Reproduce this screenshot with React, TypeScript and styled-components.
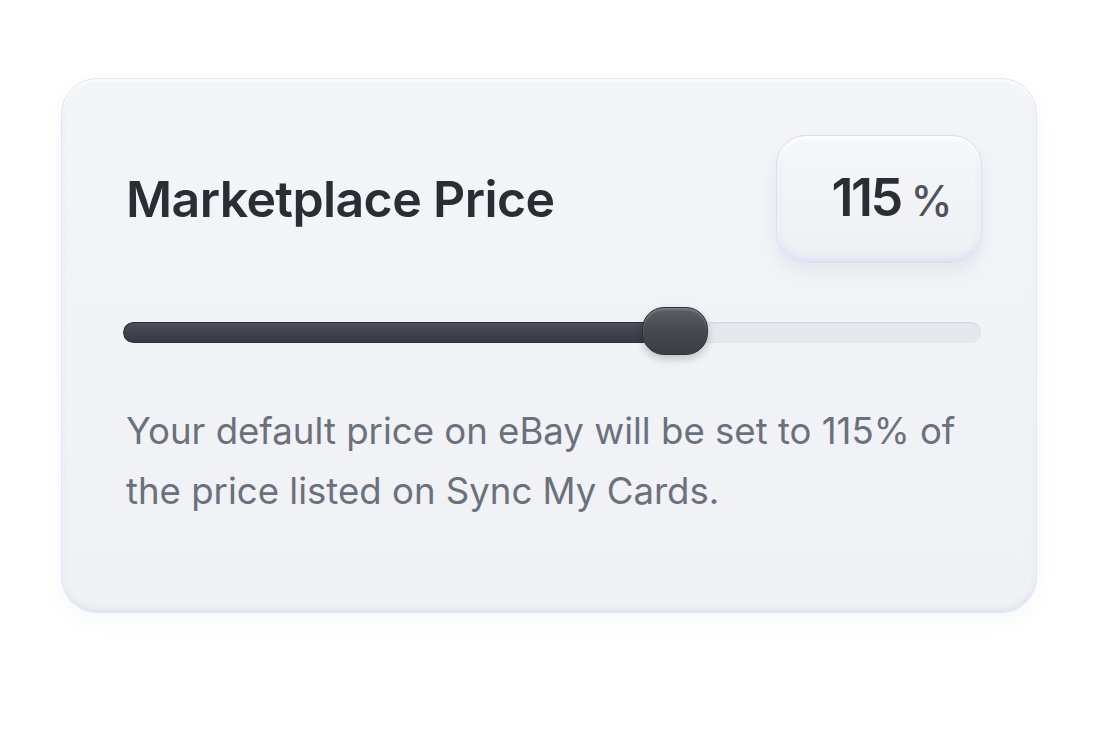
import React from "react";
import styled, { createGlobalStyle } from "styled-components";

const Global = createGlobalStyle`
  html, body { margin: 0; padding: 0; background: #ffffff; }
  body { font-family: Inter, "Noto Sans", sans-serif; }
`;

const Page = styled.div`
  width: 1098px;
  height: 742px;
  display: flex;
  align-items: flex-start;
  justify-content: flex-start;
  padding: 78px 0 0 61px;
  box-sizing: border-box;
`;

const Card = styled.div`
  width: 976px;
  height: 535px;
  box-sizing: border-box;
  border-radius: 36px;
  background: linear-gradient(180deg, #f4f5f8 0%, #f0f1f5 100%);
  border: 1.5px solid #e1e4f2;
  box-shadow: inset 0 2px 3px rgba(255,255,255,0.9), inset 0 -3px 4px rgba(210,214,240,0.5), 0 8px 20px rgba(120,130,170,0.06);
  padding: 56px 54px 0 64px;
  display: flex;
  flex-direction: column;
`;

const Header = styled.div`
  display: flex;
  align-items: center;
  justify-content: space-between;
`;

const Title = styled.h1`
  margin: 0;
  font-family: Inter, sans-serif;
  font-weight: 600;
  font-size: 50px;
  letter-spacing: -0.6px;
  color: #2a2d33;
`;

const ValueBox = styled.div`
  width: 206px;
  height: 128px;
  box-sizing: border-box;
  border-radius: 30px;
  background: linear-gradient(180deg, #f6f7fa 0%, #eff0f4 100%);
  border: 1.5px solid #d9ddf3;
  box-shadow: inset 0 3px 4px rgba(255,255,255,0.95), inset 0 -4px 6px rgba(200,205,240,0.45), 0 8px 16px rgba(120,130,170,0.12);
  display: flex;
  align-items: baseline;
  justify-content: center;
  padding-top: 30px;
  padding-left: 26px;
  gap: 10px;
`;

const Number = styled.span`
  font-family: Inter, sans-serif;
  font-weight: 600;
  font-size: 52px;
  letter-spacing: -2.5px;
  color: #2a2d33;
`;

const Unit = styled.span`
  font-family: Inter, sans-serif;
  font-weight: 500;
  font-size: 42px;
  color: #4d525b;
`;

const SliderRow = styled.div`
  margin-top: 44px;
  margin-left: -3px;
  width: 858px;
  height: 50px;
  position: relative;
  display: flex;
  align-items: center;
`;

const Track = styled.div`
  width: 100%;
  height: 21px;
  border-radius: 11px;
  background: #e5e8ee;
  box-shadow: inset 0 1px 2px rgba(150,160,180,0.25);
  overflow: hidden;
`;

const Fill = styled.div`
  height: 100%;
  border-radius: 11px;
  background: linear-gradient(180deg, #4b505a 0%, #3c414b 55%, #363a43 100%);
  box-shadow: inset 0 0 0 1px #2c3038;
`;

const Thumb = styled.div`
  position: absolute;
  top: 0;
  width: 66px;
  height: 48px;
  border-radius: 22px;
  background: linear-gradient(180deg, #5a5e66 0%, #45494f 50%, #3b3e44 100%);
  border: 1.5px solid #2e3136;
  box-sizing: border-box;
  box-shadow: inset 0 2px 2px rgba(255,255,255,0.2), 0 4px 8px rgba(0,0,0,0.2);
`;

const Description = styled.p`
  margin: 44px 0 0 0;
  font-family: Inter, sans-serif;
  font-weight: 400;
  font-size: 36.6px;
  line-height: 60px;
  color: #6b717c;
  max-width: 860px;
`;

export default function App() {
  const fillWidth = 530;
  return (
    <>
      <Global />
      <Page>
        <Card>
          <Header>
            <Title>Marketplace Price</Title>
            <ValueBox>
              <Number>115</Number>
              <Unit>%</Unit>
            </ValueBox>
          </Header>
          <SliderRow>
            <Track>
              <Fill style={{ width: fillWidth }} />
            </Track>
            <Thumb style={{ left: 519 }} />
          </SliderRow>
          <Description>
            Your default price on eBay will be set to 115% of the price listed on Sync My Cards.
          </Description>
        </Card>
      </Page>
    </>
  );
}
